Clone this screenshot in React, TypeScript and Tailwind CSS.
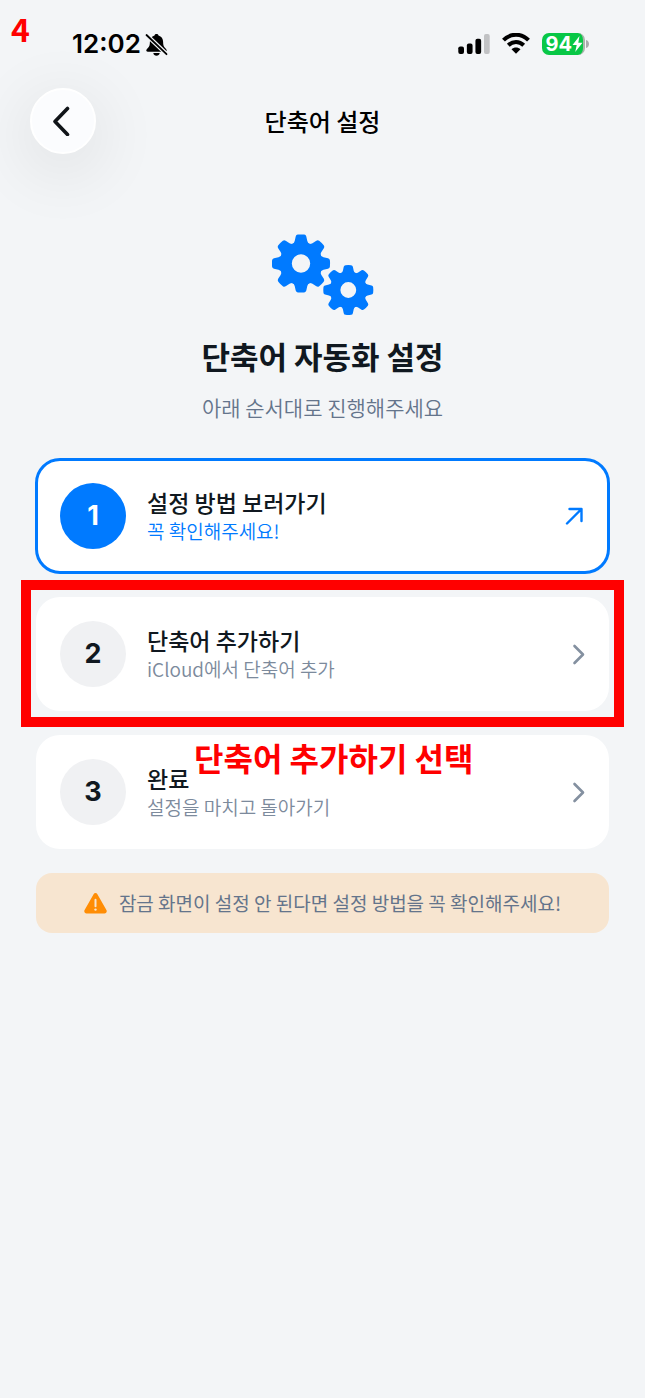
import { ReactNode } from "react";

const steps = [
  { number: 1, title: "설정 방법 보러가기", desc: "꼭 확인해주세요!", active: true },
  { number: 2, title: "단축어 추가하기", desc: "iCloud에서 단축어 추가", marked: true },
  { number: 3, title: "완료", desc: "설정을 마치고 돌아가기", note: "단축어 추가하기 선택" },
];

const teeth = [0, 45, 90, 135, 180, 225, 270, 315];

function Gear({ transform }: { transform: string }) {
  return (
    <g transform={transform}>
      <circle r="15.3" fill="none" stroke="#007aff" strokeWidth="12.2" />
      {teeth.map((angle) => (
        <path
          key={angle}
          transform={`rotate(${angle})`}
          fill="#007aff"
          d="M-9 -19 Q-6.8 -20.4 -6.3 -22.5 L-5.3 -27 Q-4.9 -28.7 -3.2 -28.9 Q0 -29.3 3.2 -28.9 Q4.9 -28.7 5.3 -27 L6.3 -22.5 Q6.8 -20.4 9 -19 Z"
        />
      ))}
    </g>
  );
}

function StatusBar() {
  return (
    <div className="relative flex h-[88px] items-center justify-between pr-14 pl-[72px]">
      <span className="absolute top-1 left-[11px] text-[32px] leading-[48px] font-bold text-[#ff0000]">
        4
      </span>
      <div className="flex items-center gap-1">
        <span className="font-[Inter,sans-serif] text-[26px] leading-8 font-semibold">12:02</span>
        <svg width="23" height="23" viewBox="0 0 23 23" aria-hidden="true">
          <path
            d="M11.5 1c-.9 0-1.7.5-2 1.4C6.500 3.200 4.900 5.600 4.900 8.800c0 3.400-.6 4.800-2.200 6.500-.9.900-1.400 1.400-1.400 2.200 0 .7.500 1.200 1.400 1.200h17.600c.9 0 1.400-.5 1.400-1.200 0-.8-.5-1.300-1.400-2.200-1.600-1.700-2.200-3.100-2.200-6.500 0-3.200-1.600-5.600-4.600-6.400-.3-.9-1.100-1.400-2-1.400z"
            fill="black"
          />
          <path d="M8.300 20h6.400c-.3 1.700-1.500 2.700-3.200 2.700s-2.900-1-3.200-2.700z" fill="black" />
          <path d="M0 .5 22 21.500" stroke="#f3f5f7" strokeWidth="4.200" />
          <path d="M1.500 2 21.500 21.200" stroke="black" strokeWidth="1.800" strokeLinecap="round" />
        </svg>
      </div>
      <div className="flex items-center gap-3">
        <svg width="32" height="20" viewBox="0 0 33 21" aria-hidden="true">
          <rect x="0" y="13" width="6" height="8" rx="2" />
          <rect x="9" y="10" width="6" height="11" rx="2" />
          <rect x="18" y="5" width="6" height="16" rx="2" />
          <rect x="27" y="0" width="6" height="21" rx="2" fill="#c1c2c4" />
        </svg>
        <svg width="28" height="22" viewBox="0 0 28 22" fill="none" stroke="black" aria-hidden="true">
          <path d="M1.500 7.200C8.500 -.1 19.500 -.1 26.500 7.200" strokeWidth="4" />
          <path d="M6.300 12.200c4.400-4.300 11-4.300 15.400 0" strokeWidth="4" />
          <path d="M14 20.800l-4.500-4.500c2.600-2.300 6.400-2.300 9 0z" fill="black" stroke="none" />
        </svg>
        <div className="flex items-center gap-px">
          <div className="flex h-[22px] items-center rounded-[7px] border-r-2 border-[#a9b5ac] bg-[#08c746] pl-[3px]">
            <span className="font-[Inter,sans-serif] text-xl leading-[22px] font-bold text-white">
              94
            </span>
            <svg width="11" height="16" viewBox="0 0 11 16" aria-hidden="true">
              <path d="M7.500 0 .5 9h4.200L3.200 16l7.300-9.200H6.300z" fill="white" />
            </svg>
          </div>
          <svg width="3" height="8" viewBox="0 0 3 8" aria-hidden="true">
            <path d="M0 0c4 1 4 7 0 8z" fill="#a9abad" />
          </svg>
        </div>
      </div>
    </div>
  );
}

function RowIcon({ children, color }: { children: ReactNode; color: string }) {
  return (
    <svg
      width="24"
      height="24"
      viewBox="0 0 24 24"
      fill="none"
      stroke={color}
      strokeLinecap="round"
      strokeLinejoin="round"
      aria-hidden="true">
      {children}
    </svg>
  );
}

export default function App() {
  return (
    <div className="min-h-screen bg-[#f3f5f7] font-['Noto_Sans_CJK_KR',sans-serif] text-black">
      <StatusBar />

      {/* Navigation */}
      <header className="grid grid-cols-[66px_1fr_66px] items-center px-[30px]">
        <button
          aria-label="뒤로"
          className="flex size-[66px] items-center justify-center rounded-full border-2 border-white bg-[#fbfcfe] shadow-[0_14px_60px_14px_rgba(0,0,0,0.06)]">
          <svg width="20" height="30" viewBox="0 0 20 30" fill="none" aria-hidden="true">
            <path
              d="M14.500 3 2 16l12.500 13"
              transform="translate(0 -.5)"
              stroke="#101418"
              strokeWidth="3.600"
              strokeLinecap="round"
              strokeLinejoin="round"
            />
          </svg>
        </button>
        <h1 className="text-center text-2xl leading-9 font-medium">단축어 설정</h1>
      </header>

      <main className="px-9 pt-20">
        {/* Intro */}
        <div className="flex flex-col items-center">
          <svg width="102" height="82" viewBox="0 0 102 82" aria-hidden="true">
            <Gear transform="translate(29 29.500)" />
            <Gear transform="translate(76.300 56) scale(.860)" />
          </svg>
          <h2 className="mt-4 text-[31px] leading-[48px] font-bold text-[#101820]">
            단축어 자동화 설정
          </h2>
          <p className="mt-[11px] text-[21px] leading-8 font-[350] text-[#64748b]">
            아래 순서대로 진행해주세요
          </p>
        </div>

        {/* Steps */}
        <div className="mt-9 flex flex-col gap-6">
          {steps.map((step) => (
            <div key={step.number} className="relative">
              <button
                className={`flex w-full items-center gap-[21px] rounded-3xl bg-white p-6 text-left ${
                  step.active ? "outline-3 -outline-offset-2 outline-[#007aff]" : ""
                }`}>
                <span
                  className={`flex size-[66px] shrink-0 items-center justify-center rounded-full font-[Inter,sans-serif] text-[27px] font-bold ${
                    step.active ? "bg-[#007aff] text-white" : "bg-[#f0f1f3] text-[#101820]"
                  }`}>
                  {step.number}
                </span>
                <span className="flex flex-1 flex-col">
                  <span className="text-[23px] leading-[30px] font-medium text-[#101820]">
                    {step.title}
                  </span>
                  <span
                    className={`text-[19px] leading-7 font-[350] ${
                      step.active ? "text-[#007aff]" : "text-[#7c8a9c]"
                    }`}>
                    {step.desc}
                  </span>
                </span>
                {step.active ? (
                  <RowIcon color="#007aff">
                    <path d="M6 19.500 20.500 5M8.500 5h12v12" strokeWidth="2.400" />
                  </RowIcon>
                ) : (
                  <RowIcon color="#8490a0">
                    <path d="m13.500 4 8.500 8.500-8.500 8.500" strokeWidth="2.600" />
                  </RowIcon>
                )}
              </button>
              {step.marked && (
                <div className="pointer-events-none absolute -inset-x-[15px] -top-[17px] -bottom-4 border-10 border-[#ff0000]" />
              )}
              {step.note && (
                <span className="pointer-events-none absolute -top-0.5 left-[158px] text-[32px] leading-[48px] font-bold whitespace-nowrap text-[#ff0000]">
                  {step.note}
                </span>
              )}
            </div>
          ))}
        </div>

        {/* Warning */}
        <div className="mt-6 flex h-[60px] items-center justify-center gap-3 rounded-2xl bg-[#f7e5d0]">
          <svg width="23" height="21" viewBox="0 0 23 21" aria-hidden="true">
            <path
              d="M9.600 1.200c.8-1.500 3-1.500 3.800 0l9 15.800c.9 1.500-.1 3.500-1.900 3.500h-18c-1.800 0-2.800-2-1.900-3.500z"
              fill="#ff8d05"
            />
            <path d="M11.500 6.800v6.400" stroke="#f7e5d0" strokeWidth="2" strokeLinecap="round" />
            <circle cx="11.500" cy="16.600" r="1.200" fill="#f7e5d0" />
          </svg>
          <p className="text-[19px] leading-7 text-[#64748b]">
            잠금 화면이 설정 안 된다면 설정 방법을 꼭 확인해주세요!
          </p>
        </div>
      </main>
    </div>
  );
}
